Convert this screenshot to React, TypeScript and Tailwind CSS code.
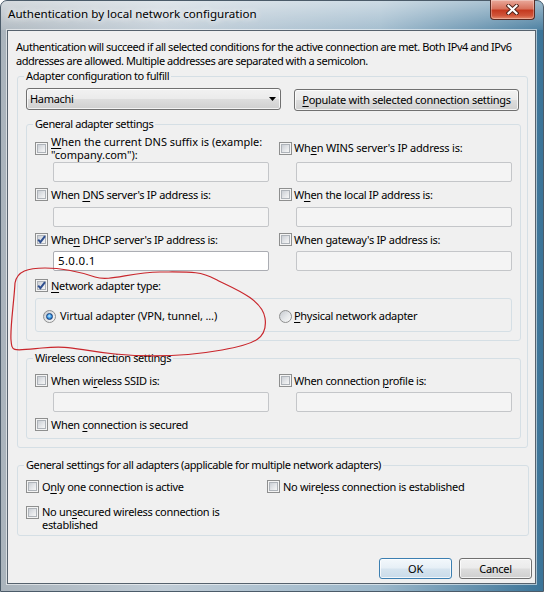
import React from 'react';

// Win7-style dialog: "Authentication by local network configuration"

const Check = ({ checked = false }: { checked?: boolean }) => (
    <span className="relative inline-block h-[13px] w-[13px] shrink-0 border border-[#8e8f8f] bg-[#f4f4f4]">
        <span className="absolute inset-[1px] border border-[#aeb3b9] bg-[linear-gradient(135deg,#cbcfd5_0%,#e4e6e9_55%,#f6f6f6_100%)]" />
        {checked && (
            <svg className="absolute left-0 top-0" width="11" height="11" viewBox="0 0 11 11">
                <path d="M2.2 5.6 L4.4 8.2 L9 2.2" fill="none" stroke="#2f4f8f" strokeWidth="2" strokeLinejoin="miter" />
            </svg>
        )}
    </span>
);

const Radio = ({ checked = false }: { checked?: boolean }) => (
    <span className="inline-flex h-[13px] w-[13px] shrink-0 items-center justify-center rounded-full border border-[#8e8f8f] bg-[linear-gradient(135deg,#c6cad0_0%,#e6e8ea_55%,#f8f8f8_100%)]">
        {checked && (
            <span className="h-[7px] w-[7px] rounded-full border border-[#173d7a] bg-[radial-gradient(circle_at_45%_40%,#c8ecff_0%,#46a4ec_45%,#0f4c9c_100%)]" />
        )}
    </span>
);

const Field = ({ value = '', enabled = false }: { value?: string; enabled?: boolean }) => (
    <div
        className={`h-[20px] w-[216px] rounded-[2px] border px-[4px] text-[11.5px] leading-[18px] tracking-[0.3px] ${
            enabled ? 'border-[#abadb3] bg-white' : 'border-[#c4c6c9] bg-[#f4f4f4]'
        }`}
    >
        {value}
    </div>
);

const Row = ({ children, cols = 'grid-cols-[244px_1fr]', className = '' }: { children: React.ReactNode; cols?: string; className?: string }) => (
    <div className={`grid ${cols} ${className}`}>{children}</div>
);

const u = 'underline decoration-1 underline-offset-[2px]';

const btn =
    'h-[21px] w-[73px] rounded-[3px] border text-center leading-[19px] shadow-[inset_0_0_0_1px_rgba(255,255,255,0.75)]';
const btnGray =
    'border-[#707070] bg-[linear-gradient(180deg,#f2f2f2_0%,#ebebeb_48%,#dddddd_52%,#cfcfcf_100%)]';

const CloseButton = () => (
    <div className="-mt-px flex h-[20px] w-[45px] items-center justify-center rounded-b-[4px] border border-t-0 border-[#5b2a22] bg-[linear-gradient(180deg,#eaa99b_0%,#d8735e_45%,#c53a20_55%,#d0553a_82%,#e58a6c_100%)] shadow-[inset_0_0_0_1px_rgba(255,255,255,0.3)]">
        <svg width="13" height="11" viewBox="0 0 13 11">
            <path d="M2.5 1.8 L10.5 9.2 M10.5 1.8 L2.5 9.2" stroke="#4d2219" strokeWidth="4" strokeLinecap="square" />
            <path d="M2.5 1.8 L10.5 9.2 M10.5 1.8 L2.5 9.2" stroke="#ffffff" strokeWidth="2.2" strokeLinecap="square" />
        </svg>
    </div>
);

export default function App() {
    return (
        <div className="relative h-[592px] w-[544px] overflow-hidden bg-white font-['Noto_Sans',sans-serif] text-[11px] leading-[14px] tracking-[-0.3px] text-black">
            <div className="flex h-full w-full flex-col rounded-t-[7px] border border-[#4b5b69] bg-[linear-gradient(90deg,#aab4bc_0%,#c0ccd6_30%,#9bb7ca_70%,#3b7498_100%)]">
                {/* Title bar */}
                <div className="flex h-[29px] shrink-0 items-start justify-between rounded-t-[6px] bg-[linear-gradient(180deg,rgba(255,255,255,0.5)_0%,rgba(255,255,255,0.1)_100%)] pl-[7px] pr-[8px]">
                    <span className="whitespace-nowrap pt-[6px] text-[11.6px] tracking-[0px] [text-shadow:0_0_6px_#fff,0_0_10px_rgba(255,255,255,0.8)]">
                        Authentication by local network configuration
                    </span>
                    <CloseButton />
                </div>

                {/* Client area */}
                <div className="mb-[7px] ml-[6px] mr-[7px] flex flex-1 flex-col border border-[#56626d] bg-[#f0f0f0] shadow-[0_0_0_1px_rgba(255,255,255,0.55)]">
                    <p className="ml-[8px] mt-[9px] whitespace-nowrap tracking-[-0.45px]">
                        Authentication will succeed if all selected conditions for the active connection are met. Both IPv4 and IPv6
                        <br />
                        addresses are allowed. Multiple addresses are separated with a semicolon.
                    </p>

                    {/* Adapter configuration */}
                    <fieldset className="ml-[9px] mt-[1px] w-[511px] rounded-[3px] border border-[#d5dfe5]">
                        <legend className="ml-[6px] px-[2px] tracking-[-0.4px]">Adapter configuration to fulfill</legend>
                        <div className="pb-[8px] pl-[8px] pt-[5px]">
                            <div className="flex items-start">
                                <div className={`flex h-[22px] w-[255px] items-center justify-between rounded-[3px] border pl-[3px] pr-[4px] shadow-[inset_0_0_0_1px_rgba(255,255,255,0.75)] ${btnGray}`}>
                                    <span>Hamachi</span>
                                    <svg width="7" height="4" viewBox="0 0 7 4">
                                        <path d="M0 0 H7 L3.5 4 Z" fill="#000" />
                                    </svg>
                                </div>
                                <div className={`ml-[13px] mt-[1px] flex h-[22px] w-[225px] items-center justify-center whitespace-nowrap rounded-[3px] border shadow-[inset_0_0_0_1px_rgba(255,255,255,0.75)] ${btnGray}`}>
                                    <span>
                                        <span className={u}>P</span>opulate with selected connection settings
                                    </span>
                                </div>
                            </div>

                            {/* General adapter settings */}
                            <fieldset className="mt-[6px] w-[494px] rounded-[3px] border border-[#d5dfe5]">
                                <legend className="ml-[6px] px-[2px] tracking-[-0.4px]">General adapter settings</legend>
                                <div className="flex flex-col px-[8px] pb-[8px] pt-[4px]">
                                    <Row className="h-[26px] items-center">
                                        <div className="flex items-center gap-[3px]">
                                            <Check />
                                            <span className="whitespace-nowrap leading-[13px] tracking-[0px]">
                                                <span className={u}>W</span>hen the current DNS suffix is (example:
                                                <br />
                                                "company.com"):
                                            </span>
                                        </div>
                                        <div className="flex items-center gap-[2px]">
                                            <Check />
                                            <span className="whitespace-nowrap tracking-[-0.2px]">
                                                Wh<span className={u}>e</span>n WINS server's IP address is:
                                            </span>
                                        </div>
                                    </Row>
                                    <Row className="mt-[1px]">
                                        <div className="ml-[18px]">
                                            <Field />
                                        </div>
                                        <div className="ml-[17px]">
                                            <Field />
                                        </div>
                                    </Row>

                                    <Row className="mt-[4px] h-[17px] items-center">
                                        <div className="flex items-center gap-[3px]">
                                            <Check />
                                            <span className="whitespace-nowrap">
                                                When <span className={u}>D</span>NS server's IP address is:
                                            </span>
                                        </div>
                                        <div className="flex items-center gap-[2px]">
                                            <Check />
                                            <span className="whitespace-nowrap">
                                                W<span className={u}>h</span>en the local IP address is:
                                            </span>
                                        </div>
                                    </Row>
                                    <Row className="mt-[4px]">
                                        <div className="ml-[18px]">
                                            <Field />
                                        </div>
                                        <div className="ml-[17px]">
                                            <Field />
                                        </div>
                                    </Row>

                                    <Row className="mt-[4px] h-[17px] items-center">
                                        <div className="flex items-center gap-[3px]">
                                            <Check checked />
                                            <span className="whitespace-nowrap">
                                                Whe<span className={u}>n</span> DHCP server's IP address is:
                                            </span>
                                        </div>
                                        <div className="flex items-center gap-[2px]">
                                            <Check />
                                            <span className="whitespace-nowrap">
                                                When <span className={u}>g</span>ateway's IP address is:
                                            </span>
                                        </div>
                                    </Row>
                                    <Row className="mt-[3px]">
                                        <div className="ml-[18px]">
                                            <Field value="5.0.0.1" enabled />
                                        </div>
                                        <div className="ml-[17px]">
                                            <Field />
                                        </div>
                                    </Row>

                                    <div className="mt-[6px] flex h-[17px] items-center gap-[3px]">
                                        <Check checked />
                                        <span className="whitespace-nowrap">
                                            <span className={u}>N</span>etwork adapter type:
                                        </span>
                                    </div>
                                    <div className="mt-[4px] grid h-[34px] w-[477px] grid-cols-[236px_1fr] items-center rounded-[3px] border border-[#d5dfe5] pl-[7px] pt-[2px]">
                                        <div className="flex items-center gap-[4px]">
                                            <Radio checked />
                                            <span className="whitespace-nowrap tracking-[-0.15px]">Virtual adapter (VPN, tunnel, ...)</span>
                                        </div>
                                        <div className="flex items-center gap-[2px]">
                                            <Radio />
                                            <span className="whitespace-nowrap">
                                                <span className={u}>P</span>hysical network adapter
                                            </span>
                                        </div>
                                    </div>
                                </div>
                            </fieldset>

                            {/* Wireless connection settings */}
                            <fieldset className="mt-[10px] w-[494px] rounded-[3px] border border-[#d5dfe5]">
                                <legend className="ml-[6px] px-[2px] tracking-[-0.4px]">Wireless connection settings</legend>
                                <div className="flex flex-col px-[8px] pb-[5px] pt-[7px]">
                                    <Row className="h-[17px] items-center">
                                        <div className="flex items-center gap-[3px]">
                                            <Check />
                                            <span className="whitespace-nowrap">
                                                When wi<span className={u}>r</span>eless SSID is:
                                            </span>
                                        </div>
                                        <div className="flex items-center gap-[2px]">
                                            <Check />
                                            <span className="whitespace-nowrap">
                                                When connection <span className={u}>p</span>rofile is:
                                            </span>
                                        </div>
                                    </Row>
                                    <Row className="mt-[3px]">
                                        <div className="ml-[18px]">
                                            <Field />
                                        </div>
                                        <div className="ml-[17px]">
                                            <Field />
                                        </div>
                                    </Row>
                                    <div className="mt-[4px] flex h-[17px] items-center gap-[3px]">
                                        <Check />
                                        <span className="whitespace-nowrap">
                                            When <span className={u}>c</span>onnection is secured
                                        </span>
                                    </div>
                                </div>
                            </fieldset>
                        </div>
                    </fieldset>

                    {/* General settings for all adapters */}
                    <fieldset className="ml-[9px] mt-[10px] w-[512px] rounded-[3px] border border-[#d5dfe5]">
                        <legend className="ml-[6px] px-[2px] tracking-[-0.4px]">General settings for all adapters (applicable for multiple network adapters)</legend>
                        <div className="flex flex-col pb-[4px] pl-[8px] pt-[6px]">
                            <Row cols="grid-cols-[241px_1fr]" className="h-[17px] items-center">
                                <div className="flex items-center gap-[3px]">
                                    <Check />
                                    <span className="whitespace-nowrap">
                                        O<span className={u}>n</span>ly one connection is active
                                    </span>
                                </div>
                                <div className="flex items-center gap-[3px]">
                                    <Check />
                                    <span className="whitespace-nowrap">
                                        No wire<span className={u}>l</span>ess connection is established
                                    </span>
                                </div>
                            </Row>
                            <div className="mt-[10px] flex items-start gap-[3px]">
                                <span className="mt-[1px] flex">
                                    <Check />
                                </span>
                                <span className="whitespace-nowrap leading-[13px]">
                                    No un<span className={u}>s</span>ecured wireless connection is
                                    <br />
                                    established
                                </span>
                            </div>
                        </div>
                    </fieldset>

                    {/* Buttons */}
                    <div className="mt-[22px] flex justify-end gap-[7px] pr-[3px]">
                        <button className={`${btn} border-[#3c7fb1] bg-[linear-gradient(180deg,#f3f8fc_0%,#e6eff6_48%,#d6e4ef_52%,#c9dbe9_100%)] shadow-[inset_0_0_0_1px_#c6e4f8]`}>
                            OK
                        </button>
                        <button className={`${btn} ${btnGray}`}>Cancel</button>
                    </div>
                </div>
            </div>

            {/* Red freehand annotation */}
            <svg className="pointer-events-none absolute left-0 top-0" width="544" height="592" viewBox="0 0 544 592">
                <path
                    d="M15 283 C17 271 28 268 45 268 S80 272 95 277 S130 272 160 272 S200 271 215 279 S262 298 265 318 S256 344 222 350 S155 358 115 354 S72 345 42 348 S12 352 11 340 S14 302 15 283"
                    fill="none"
                    stroke="#c9262c"
                    strokeWidth="1.2"
                />
            </svg>
        </div>
    );
}
